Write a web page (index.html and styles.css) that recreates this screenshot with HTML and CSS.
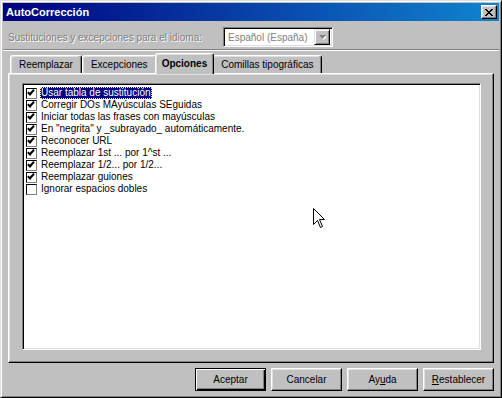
FILE: index.html
```html
<!DOCTYPE html>
<html lang="es">
<head>
    <meta charset="UTF-8">
    <title>AutoCorrección</title>
    <link rel="stylesheet" href="styles.css">
</head>
<body>
    <div class="window">
        <div class="titlebar">
            <span class="title">AutoCorrección</span>
            <button class="close-btn" aria-label="Cerrar">
                <svg width="8" height="7" viewBox="0 0 8 7">
                    <path d="M0 0h2v1h-2zM6 0h2v1h-2zM1 1h2v1h-2zM5 1h2v1h-2zM2 2h4v1h-4zM3 3h2v1h-2zM2 4h4v1h-4zM1 5h2v1h-2zM5 5h2v1h-2zM0 6h2v1h-2zM6 6h2v1h-2z" fill="#000"/>
                </svg>
            </button>
        </div>

        <div class="lang-row">
            <span class="lang-label">Sustituciones y excepciones para el idioma:</span>
            <div class="combo">
                <span class="combo-text">Español (España)</span>
                <span class="combo-btn">
                    <svg width="7" height="5" viewBox="0 0 7 5">
                        <path d="M1 1h7l-3.5 4z" fill="#fff"/>
                        <path d="M0 0h7l-3.5 4z" fill="#808080"/>
                    </svg>
                </span>
            </div>
        </div>
        <div class="separator"></div>

        <div class="tabs">
            <div class="tab">Reemplazar</div>
            <div class="tab">Excepciones</div>
            <div class="tab active">Opciones</div>
            <div class="tab">Comillas tipográficas</div>
        </div>

        <div class="panel">
            <ul class="listbox">
                <li class="item"><span class="check on"></span><span class="label selected">Usar tabla de sustitución</span></li>
                <li class="item"><span class="check on"></span><span class="label">Corregir DOs MAyúsculas SEguidas</span></li>
                <li class="item"><span class="check on"></span><span class="label">Iniciar todas las frases con mayúsculas</span></li>
                <li class="item"><span class="check on"></span><span class="label">En "negrita" y _subrayado_ automáticamente.</span></li>
                <li class="item"><span class="check on"></span><span class="label">Reconocer URL</span></li>
                <li class="item"><span class="check on"></span><span class="label">Reemplazar 1st ... por 1^st ...</span></li>
                <li class="item"><span class="check on"></span><span class="label">Reemplazar 1/2... por 1/2...</span></li>
                <li class="item"><span class="check on"></span><span class="label">Reemplazar guiones</span></li>
                <li class="item"><span class="check"></span><span class="label">Ignorar espacios dobles</span></li>
            </ul>
        </div>

        <div class="buttons">
            <button class="btn default">Aceptar</button>
            <button class="btn">Cancelar</button>
            <button class="btn">Ay<u>u</u>da</button>
            <button class="btn"><u>R</u>establecer</button>
        </div>

        <!-- mouse pointer over the list -->
        <svg class="cursor" width="13" height="21" viewBox="0 0 13 21">
            <path d="M0.5 0.5V16.5L4.5 12.5L7.5 19.5L9.5 18.5L6.5 11.5H11.5Z" fill="#fff" stroke="#000" stroke-width="1"/>
        </svg>
    </div>
</body>
</html>
```

FILE: styles.css
```css
body { margin: 0; font-family: 'Liberation Sans', Arial, sans-serif; font-size: 10px; color: #000; background: #c0c0c0; }

.window { position: relative; width: 502px; height: 398px; box-sizing: border-box; background: #c0c0c0; border: 1px solid; border-color: #dfdfdf #000 #000 #dfdfdf; box-shadow: inset 1px 1px #fff, inset -1px -1px #808080; padding: 2px 2px 1px 2px; display: flex; flex-direction: column; }

/* title bar */
.titlebar { height: 18px; flex: none; display: flex; align-items: center; justify-content: space-between; padding: 0 2px 0 3px; background: linear-gradient(to right, #000080, #1084d0); }
.title { color: #fff; font-weight: bold; font-size: 11px; }
.close-btn { width: 16px; height: 14px; padding: 0; margin: 0; display: flex; align-items: center; justify-content: center; background: #c0c0c0; border: 1px solid; border-color: #fff #000 #000 #fff; box-shadow: inset -1px -1px #808080, inset 1px 1px #dfdfdf; }

/* language row */
.lang-row { height: 20px; flex: none; margin-top: 6px; padding-left: 5px; display: flex; align-items: center; }
.lang-label { width: 215px; color: #808080; text-shadow: 1px 1px #fff; white-space: nowrap; }
.combo { width: 110px; height: 20px; box-sizing: border-box; display: flex; align-items: center; background: #fff; border: 1px solid; border-color: #808080 #fff #fff #808080; box-shadow: inset 1px 1px #000, inset -1px -1px #dfdfdf; padding: 2px; }
.combo-text { flex: 1; color: #808080; padding-left: 2px; white-space: nowrap; overflow: hidden; }
.combo-btn { width: 16px; height: 16px; flex: none; box-sizing: border-box; display: flex; align-items: center; justify-content: center; background: #c0c0c0; border: 1px solid; border-color: #dfdfdf #000 #000 #dfdfdf; box-shadow: inset 1px 1px #fff, inset -1px -1px #808080; }

.separator { height: 1px; flex: none; margin-top: 2px; background: #808080; border-bottom: 1px solid #fff; }

/* tabs */
.tabs { height: 22px; flex: none; display: flex; align-items: flex-end; padding-left: 7px; position: relative; z-index: 1; }
.tab { height: 18px; box-sizing: border-box; padding: 0 8px; display: flex; align-items: center; white-space: nowrap; border: 1px solid; border-bottom: none; border-color: #fff #000 #000 #fff; border-radius: 3px 3px 0 0; box-shadow: inset -1px 0 #808080, inset 1px 1px #dfdfdf; background: #c0c0c0; }
.tab.active { height: 21px; margin: 0 -2px -1px; padding: 0 6px 2px; font-weight: bold; position: relative; z-index: 2; }

/* options panel */
.panel { height: 290px; flex: none; box-sizing: border-box; margin: 0 5px; display: flex; border: 1px solid; border-color: #fff #000 #000 #fff; box-shadow: inset -1px -1px #808080, inset 1px 1px #dfdfdf; padding: 9px 12px 12px 13px; }
.listbox { flex: 1; margin: 0; list-style: none; background: #fff; border: 1px solid; border-color: #808080 #fff #fff #808080; box-shadow: inset 1px 1px #000, inset -1px -1px #dfdfdf; padding: 3px 2px 0 3px; }
.item { height: 12px; display: flex; align-items: center; }
.check { width: 11px; height: 11px; box-sizing: border-box; flex: none; margin-right: 3px; background: #fff; border: 1px solid; border-color: #000 #808080 #808080 #000; position: relative; }
.check.on::after { content: ""; position: absolute; left: 1px; top: 0px; width: 5px; height: 2px; border-left: 2px solid #000; border-bottom: 2px solid #000; transform: rotate(-48deg); transform-origin: 4px 3px; }
.label { padding: 0 1px; line-height: 12px; white-space: nowrap; }
.label.selected { background: #000080; color: #fff; outline: 1px dotted #ffff80; outline-offset: -1px; }

/* dialog buttons */
.buttons { flex: none; margin-top: 5px; padding-right: 5px; display: flex; justify-content: flex-end; gap: 5px; }
.btn { width: 71px; height: 23px; padding: 0; margin: 0; font-family: inherit; font-size: 10px; color: #000; background: #c0c0c0; border: 1px solid; border-color: #fff #000 #000 #fff; box-shadow: inset -1px -1px #808080, inset 1px 1px #dfdfdf; }
.btn.default { border-color: #000; box-shadow: inset 1px 1px #fff, inset -1px -1px #000, inset -2px -2px #808080; }

.cursor { position: absolute; left: 312px; top: 207px; }
```
